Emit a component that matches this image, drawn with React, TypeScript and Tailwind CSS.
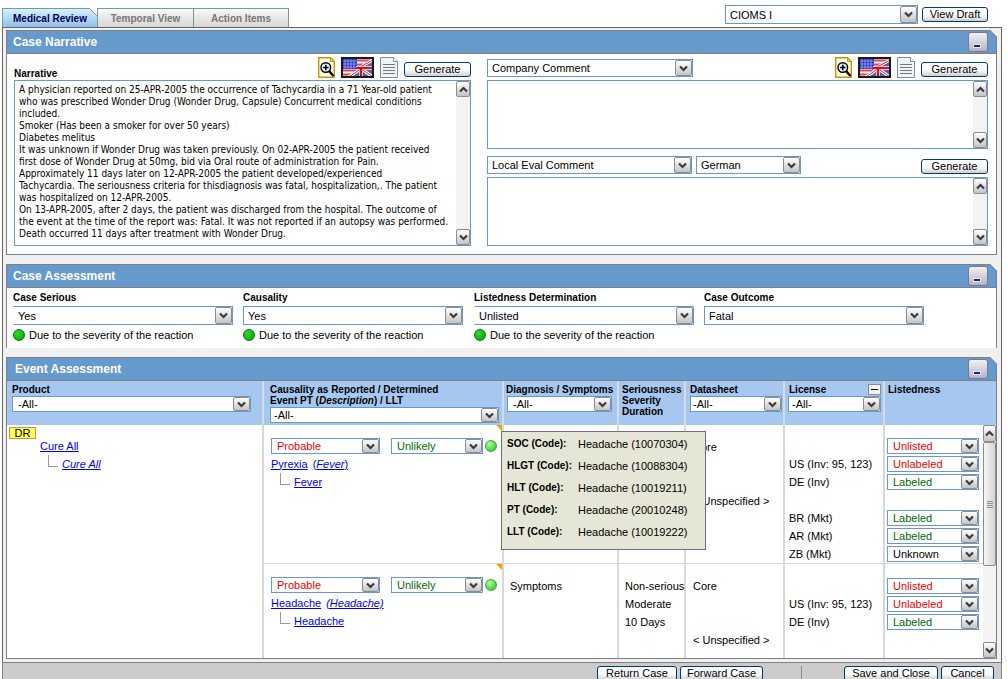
import { useId } from "react";
import type { ReactNode } from "react";
import clsx from "clsx";

const narrative = `A physician reported on 25-APR-2005 the occurrence of Tachycardia in a 71 Year-old patient
who was prescribed Wonder Drug (Wonder Drug, Capsule) Concurrent medical conditions
included.
Smoker (Has been a smoker for over 50 years)
Diabetes melitus
It was unknown if Wonder Drug was taken previously. On 02-APR-2005 the patient received
first dose of Wonder Drug at 50mg, bid via Oral route of administration for Pain.
Approximately 11 days later on 12-APR-2005 the patient developed/experienced
Tachycardia. The seriousness criteria for thisdiagnosis was fatal, hospitalization,. The patient
was hospitalized on 12-APR-2005.
On 13-APR-2005, after 2 days, the patient was discharged from the hospital. The outcome of
the event at the time of the report was: Fatal. It was not reported if an autopsy was performed.
Death occurred 11 days after treatment with Wonder Drug.`;

const codes = [
  ["SOC (Code):", "Headache (10070304)"],
  ["HLGT (Code):", "Headache (10088304)"],
  ["HLT (Code):", "Headache (10019211)"],
  ["PT (Code):", "Headache (20010248)"],
  ["LLT (Code):", "Headache (10019222)"],
];

const assessments = [
  { label: "Case Serious", value: "Yes", reason: true, open: true },
  { label: "Causality", value: "Yes", reason: true, open: false },
  { label: "Listedness Determination", value: "Unlisted", reason: true, open: true },
  { label: "Case Outcome", value: "Fatal", reason: false, open: false },
];

type Tone = "red" | "green" | "black";

const tones: Record<Tone, string> = {
  red: "text-[#f00000]",
  green: "text-[#006a00]",
  black: "text-black",
};

const firstListing: ([string, Tone] | null)[] = [
  ["Unlisted", "red"],
  ["Unlabeled", "red"],
  ["Labeled", "green"],
  null,
  ["Labeled", "green"],
  ["Labeled", "green"],
  ["Unknown", "black"],
];

const secondListing: ([string, Tone] | null)[] = [
  ["Unlisted", "red"],
  ["Unlabeled", "red"],
  ["Labeled", "green"],
];

function Chevron({ up = false }: { up?: boolean }) {
  return (
    <svg width="9" height="7" viewBox="0 0 9 7" fill="none" className={clsx(up && "rotate-180")}>
      <path d="M1 1.5 4.5 5 8 1.5" stroke="#3a3a3a" strokeWidth="2.2" />
    </svg>
  );
}

const grayFace = "flex items-center justify-center rounded-[2px] border border-[#8c8c8c] bg-linear-to-b from-white to-[#c4c4c4]";

type SelectProps = { label: string; value: string; className?: string; field?: string };

function Select({ label, value, className, field = "h-[16px] pl-[5px]" }: SelectProps) {
  return (
    <div className={clsx("relative", className)}>
      <select
        aria-label={label}
        className={clsx("block w-full appearance-none border border-[#6699cc] bg-white pr-[18px] text-[11px] leading-[14px]", field)}
      >
        <option>{value}</option>
      </select>
      <span className={clsx(grayFace, "pointer-events-none absolute inset-y-px right-px w-[17px]")}>
        <Chevron />
      </span>
    </div>
  );
}

function PushButton({ children, className }: { children: ReactNode; className?: string }) {
  return (
    <button
      className={clsx(
        "h-[15px] rounded-[3px] border border-[#003c74] bg-linear-to-b from-white from-50% to-[#cfcfcf] text-center text-[11px] leading-[13px] whitespace-nowrap",
        className,
      )}
    >
      {children}
    </button>
  );
}

function TextBox({ id, label, value = "", className }: { id?: string; label?: string; value?: string; className?: string }) {
  return (
    <div className={clsx("flex border border-[#6699cc] bg-white", className)}>
      <textarea
        id={id}
        aria-label={label}
        defaultValue={value}
        wrap="off"
        className="min-w-0 flex-1 resize-none overflow-hidden pt-[3px] pl-1 font-['DejaVu_Sans_Condensed','DejaVu_Sans',sans-serif] text-[10px] leading-[12px]"
      />
      <div className="flex w-[14px] flex-col justify-between bg-[#f3f3f3]">
        <button aria-label="Scroll up" className={clsx(grayFace, "h-[16px]")}>
          <Chevron up />
        </button>
        <button aria-label="Scroll down" className={clsx(grayFace, "h-[16px]")}>
          <Chevron />
        </button>
      </div>
    </div>
  );
}

function ZoomIcon() {
  return (
    <svg width="17" height="21" viewBox="0 0 17 21">
      <path d="M.7.7h11.8l3.8 3.8v15.8H.7z" fill="#fffbe6" stroke="#c89600" strokeWidth="1.4" />
      <path d="M12.5.7v3.8h3.8" fill="none" stroke="#c89600" />
      <path d="m11 14 4.5 5" stroke="#000" strokeWidth="2.4" />
      <circle cx="7.8" cy="10.5" r="4.8" fill="#e4f4ff" stroke="#000" strokeWidth="1.4" />
      <path d="M7.8 7.8v5.4M5.1 10.5h5.4" stroke="#000" strokeWidth="1.6" />
    </svg>
  );
}

function FlagIcon() {
  return (
    <svg width="33" height="21" viewBox="0 0 33 21">
      <path d="M0 0h33v21H0z" fill="#fff" />
      <path d="M16 3.500h16M16 7.500h16M1 13.500h14M1 17.500h10" stroke="#e8404a" strokeWidth="2" />
      <path d="M1 1h15v11H1z" fill="#2230c8" />
      <path d="M1 4h15M1 7h15M1 10h15M4 1v11M7 1v11M10 1v11M13 1v11" stroke="#c8ccf4" strokeWidth=".6" />
      <path d="M32 4v16H8l7-8 6-4z" fill="#4a66ac" />
      <path d="m8 20 10-7M21 9l11-6M22 13l10 7" stroke="#fff" strokeWidth="3" />
      <path d="m8 20 10-7M21 9l11-6M22 13l10 7" stroke="#d8202a" />
      <path d="M20 9v11M15 11h17" stroke="#fff" strokeWidth="4" />
      <path d="M20 10v10M15 11h17" stroke="#c8142a" strokeWidth="2.6" />
      <path d="M1 1h31v19H1z" fill="none" stroke="#1a1a1a" strokeWidth="2" />
    </svg>
  );
}

function PageIcon() {
  return (
    <svg width="18" height="21" viewBox="0 0 18 21">
      <path d="M.5.500h13l4 4v16H.5z" fill="#eef4fb" stroke="#8a8a8a" />
      <path d="M13.500.500v4h4" fill="#fff" stroke="#8a8a8a" />
      <path d="M3 7.500h12M3 10.500h12M3 13.500h12M3 16.500h12" stroke="#777" />
    </svg>
  );
}

function Toolbar() {
  return (
    <div className="flex items-end">
      <button aria-label="Zoom" className="mr-[6px] mb-[2px]"><ZoomIcon /></button>
      <button aria-label="Language" className="mr-[6px] mb-[2px]"><FlagIcon /></button>
      <button aria-label="Notes" className="mr-[6px] mb-[2px]"><PageIcon /></button>
      <PushButton className="mb-[3px] w-[67px]">Generate</PushButton>
    </div>
  );
}

function Ball({ light = false }: { light?: boolean }) {
  return (
    <span
      className={clsx(
        "block size-[12px] shrink-0 rounded-full border bg-radial-[at_35%_30%]",
        light ? "border-[#3fa83f] from-[#a8ff98] to-[#1fbf1f]" : "border-[#0b7a0b] from-[#30dc30] to-[#009c00]",
      )}
    />
  );
}

function Panel({ title, titleClass, className, children }: { title: string; titleClass?: string; className?: string; children: ReactNode }) {
  return (
    <section className={clsx("relative border-x border-t border-[#808080] bg-white", className)}>
      <header className="flex h-[23px] items-center justify-between border-b border-[#808080] bg-[#6699cc] pr-[8px]">
        <h2 className={clsx("text-xs font-bold text-white", titleClass)}>{title}</h2>
        <button
          aria-label={`Collapse ${title}`}
          className="flex size-[20px] items-end rounded-[3px] border border-[#77779c] bg-linear-to-b from-[#f2f2f2] to-[#b4b4c6] pb-[3px] pl-[4px]"
        >
          <span className="block h-[4px] w-[8px] border border-[#e8e8f4] bg-[#24245c]" />
        </button>
      </header>
      {/* cut corner */}
      <svg width="8" height="8" viewBox="0 0 8 8" className="absolute -top-px -right-px">
        <path d="M1 0h7v7z" fill="#f0f0f0" />
        <path d="M.5 0 8 7.500" stroke="#808080" />
      </svg>
      {children}
    </section>
  );
}

function CaseNarrative() {
  const id = useId();
  return (
    <Panel title="Case Narrative" titleClass="pl-[6px]" className="border-b">
      <div className="grid grid-cols-[457fr_501fr] gap-[16px] pt-[3px] pr-[8px] pb-[8px] pl-[7px]">
        <div className="flex flex-col">
          <div className="flex h-[23px] items-end justify-between">
            <label htmlFor={id} className="text-[10px] leading-[12px] font-bold">Narrative</label>
            <Toolbar />
          </div>
          <TextBox id={id} value={narrative} className="h-[166px]" />
        </div>
        <div className="flex flex-col">
          <div className="flex h-[23px] items-end justify-between">
            <Select label="Comment type" value="Company Comment" className="mb-[3px] w-[206px]" field="h-[18px] pl-1" />
            <Toolbar />
          </div>
          <TextBox label="Company Comment text" className="h-[69px]" />
          <div className="flex h-[28px] items-end justify-between">
            <div className="mb-[3px] flex gap-1">
              <Select label="Evaluation type" value="Local Eval Comment" className="w-[205px]" field="h-[18px] pl-1" />
              <Select label="Language" value="German" className="w-[105px]" field="h-[18px] pl-1" />
            </div>
            <PushButton className="mb-[3px] w-[67px]">Generate</PushButton>
          </div>
          <TextBox label="Local Eval Comment text" className="h-[69px]" />
        </div>
      </div>
    </Panel>
  );
}

function CaseAssessment() {
  return (
    <Panel title="Case Assessment" titleClass="pl-[6px]" className="mt-[9px]">
      <div className="grid h-[60px] grid-cols-[230fr_231fr_230fr_292fr] pt-1 pl-[6px]">
        {assessments.map((item) => (
          <div key={item.label}>
            <div className="pb-[2px] text-[10px] leading-[12px] font-bold">{item.label}</div>
            <Select
              label={item.label}
              value={item.value}
              className="w-[220px]"
              field={item.open ? "h-[19px] border-l-transparent pl-1" : "h-[19px] pl-1"}
            />
            {item.reason && (
              <div className="mt-[3px] flex h-[14px] items-center gap-[4px] text-[11px] leading-[14px]">
                <Ball />
                Due to the severity of the reaction
              </div>
            )}
          </div>
        ))}
      </div>
    </Panel>
  );
}

const link = "text-[#0000ee] underline";

function Branch({ children, className }: { children: ReactNode; className?: string }) {
  return (
    <div className={clsx("flex h-[18px] items-center gap-[4px]", className)}>
      <span className="mb-[7px] h-[12px] w-[10px] border-b border-l border-[#999]" />
      {children}
    </div>
  );
}

function CausalityCell({ name, lowest, description }: { name: string; lowest: string; description: ReactNode }) {
  return (
    <div>
      <div className="flex h-[18px] items-center">
        <Select label={`${name} reported causality`} value="Probable" className="mr-[11px] w-[109px] text-[#f00000]" />
        <Select label={`${name} determined causality`} value="Unlikely" className="mr-[2px] w-[92px] text-[#006a00]" />
        <Ball light />
      </div>
      <div className="flex h-[18px] items-center gap-[5px]">
        <a href="#event" className={link}>{name}</a>
        {description}
      </div>
      <Branch className="pl-[9px]">
        <a href="#llt" className={link}>{lowest}</a>
      </Branch>
    </div>
  );
}

function Corner() {
  return (
    <svg width="6" height="6" viewBox="0 0 6 6" className="absolute top-0 right-0">
      <path d="M0 0h6v6z" fill="#ff9900" />
    </svg>
  );
}

function Lines({ items }: { items: string[] }) {
  return (
    <div className="leading-[18px] whitespace-nowrap">
      {items.map((item, i) => (
        <div key={i} className="h-[18px]">{item}</div>
      ))}
    </div>
  );
}

function Listings({ items }: { items: ([string, Tone] | null)[] }) {
  return (
    <div>
      {items.map((item, i) => (
        <div key={i} className={clsx("flex h-[18px] items-center", item && tones[item[1]])}>
          {item && <Select label={`Listedness ${i + 1}`} value={item[0]} className="w-[92px]" />}
        </div>
      ))}
    </div>
  );
}

function CodeTip() {
  return (
    <dl
      role="tooltip"
      className="absolute top-[6px] -left-[3px] z-10 grid w-[205px] grid-cols-[71px_1fr] gap-y-[2px] border border-[#707070] bg-[#e5e6d5] px-[5px] pt-[2px] pb-[7px] leading-[20px] whitespace-nowrap"
    >
      {codes.map(([term, code]) => (
        <div key={term} className="contents">
          <dt className="text-[10px] font-bold">{term}</dt>
          <dd>{code}</dd>
        </div>
      ))}
    </dl>
  );
}

function EventAssessment() {
  const th = "border-r-2 border-[#d8dce2] pt-[3px] text-left align-top font-bold";
  const td = "relative border-r-2 border-[#d8d8d8] align-top";
  return (
    <Panel title="Event Assessment" titleClass="pl-2" className="mt-[9px] border-b">
      <table className="w-full table-fixed border-separate border-spacing-0 text-[11px]">
        <colgroup>
          <col />
          <col className="w-[240px]" />
          <col className="w-[115px]" />
          <col className="w-[67px]" />
          <col className="w-[99px]" />
          <col className="w-[100px]" />
          <col className="w-[98px]" />
          <col className="w-[13px]" />
        </colgroup>
        <thead className="bg-[#a6c8f0] text-[10px] leading-[11px]">
          <tr className="h-[44px]">
            <th className={clsx(th, "pl-[5px]")}>
              Product
              <Select label="Product" value="-All-" className="mt-px w-[239px] font-normal" />
            </th>
            <th className={clsx(th, "pl-[6px]")}>
              Causality as Reported / Determined
              <br />
              Event PT (<i>Description</i>) / LLT
              <Select label="Causality" value="-All-" className="mt-px w-[229px] font-normal" field="h-[16px] pl-[3px]" />
            </th>
            <th className={clsx(th, "pl-[2px] whitespace-nowrap")}>
              Diagnosis / Symptoms
              <Select label="Diagnosis" value="-All-" className="mt-px ml-px w-[105px] font-normal" />
            </th>
            <th className={clsx(th, "pl-[3px]")}>
              Seriousness
              <br />
              Severity
              <br />
              Duration
            </th>
            <th className={clsx(th, "pl-1")}>
              Datasheet
              <Select label="Datasheet" value="-All-" className="mt-px w-[92px] font-normal" field="h-[16px] pl-[2px]" />
            </th>
            <th className={clsx(th, "pl-[3px]")}>
              <div className="flex justify-between pr-[2px] pl-px">
                License
                <button aria-label="Collapse licenses" className="flex h-[11px] w-[13px] items-center justify-center border border-[#8c8c8c] bg-[#f4f4f4]">
                  <span className="h-px w-[7px] bg-black" />
                </button>
              </div>
              <Select label="License" value="-All-" className="mt-px w-[93px] font-normal" field="h-[16px] pl-[3px]" />
            </th>
            <th colSpan={2} className="pt-[3px] pl-[3px] text-left align-top font-bold">Listedness</th>
          </tr>
        </thead>
        <tbody>
          <tr className="h-[139px]">
            <td rowSpan={2} className={clsx(td, "pt-[2px] pl-[2px]")}>
              <div className="h-[12px] w-[27px] border border-[#c89632] bg-[#ffff66] text-center leading-[10px]">DR</div>
              <div className="pl-[31px] leading-[14px]"><a href="#product" className={link}>Cure All</a></div>
              <Branch className="mt-[2px] pl-[39px]">
                <a href="#license" className={clsx(link, "italic")}>Cure All</a>
              </Branch>
            </td>
            <td className={clsx(td, "border-b pt-[12px] pl-[7px]")}>
              <CausalityCell
                name="Pyrexia"
                lowest="Fever"
                description={<a href="#description" className={link}>(<i>Fever</i>)</a>}
              />
              <Corner />
            </td>
            <td className={clsx(td, "border-b")}><CodeTip /></td>
            <td className={clsx(td, "border-b")} />
            <td className={clsx(td, "border-b pt-[13px] pl-[7px]")}>
              <Lines items={["Core", "", "", "< Unspecified >"]} />
            </td>
            <td className={clsx(td, "border-b pt-[12px] pl-1")}>
              <Lines items={["", "US (Inv: 95, 123)", "DE (Inv)", "", "BR (Mkt)", "AR (Mkt)", "ZB (Mkt)"]} />
            </td>
            <td className="border-b border-[#d8d8d8] pt-[12px] pl-[2px] align-top">
              <Listings items={firstListing} />
            </td>
            <td rowSpan={2} className="bg-[#f3f3f3] p-0 align-top">
              <div className="flex h-[233px] flex-col">
                <button aria-label="Scroll up" className={clsx(grayFace, "h-[17px]")}><Chevron up /></button>
                <div className="flex h-[124px] flex-col items-center justify-center gap-px rounded-[2px] border border-[#8c8c8c] bg-linear-to-r from-[#f6f6f6] to-[#d4d4d4]">
                  <span className="h-px w-[6px] bg-[#8c8c8c]" />
                  <span className="h-px w-[6px] bg-[#8c8c8c]" />
                  <span className="h-px w-[6px] bg-[#8c8c8c]" />
                  <span className="h-px w-[6px] bg-[#8c8c8c]" />
                </div>
                <button aria-label="Scroll down" className={clsx(grayFace, "mt-auto h-[16px]")}><Chevron /></button>
              </div>
            </td>
          </tr>
          <tr className="h-[94px]">
            <td className={clsx(td, "pt-[12px] pl-[7px]")}>
              <CausalityCell
                name="Headache"
                lowest="Headache"
                description={<a href="#description" className={clsx(link, "italic")}>(Headache)</a>}
              />
              <Corner />
            </td>
            <td className={clsx(td, "pt-[13px] pl-[6px]")}><Lines items={["Symptoms"]} /></td>
            <td className={clsx(td, "pt-[13px] pl-[6px]")}><Lines items={["Non-serious", "Moderate", "10 Days"]} /></td>
            <td className={clsx(td, "pt-[13px] pl-[7px]")}><Lines items={["Core", "", "", "< Unspecified >"]} /></td>
            <td className={clsx(td, "pt-[13px] pl-1")}><Lines items={["", "US (Inv: 95, 123)", "DE (Inv)"]} /></td>
            <td className="pt-[13px] pl-[2px] align-top"><Listings items={secondListing} /></td>
          </tr>
        </tbody>
      </table>
    </Panel>
  );
}

export default function App() {
  return (
    <div className="flex h-screen flex-col overflow-hidden bg-white pr-[5px] pl-[2px] font-['Liberation_Sans',Arial,sans-serif] text-[11px] text-black">
      {/* Tabs and report picker */}
      <div className="flex h-[27px] shrink-0 items-end justify-between">
        <nav className="flex h-[19px] text-[10px] font-bold text-[#777]">
          <button className="relative w-[95px] border-t border-l border-[#6f9d97] bg-linear-to-b from-[#d4f0ff] to-[#8fc0ea] text-[#000050]">
            Medical Review
            <svg width="8" height="8" viewBox="0 0 8 8" className="absolute -top-px right-0">
              <path d="M0 0h8v8z" fill="#fff" />
              <path d="m0 0 8 8" stroke="#6f9d97" />
            </svg>
          </button>
          <button className="w-[97px] border-x border-t border-[#6f9d97] bg-linear-to-b from-[#f8f8f8] to-[#d6d6d6]">Temporal View</button>
          <button className="w-[95px] border-t border-r border-[#6f9d97] bg-linear-to-b from-[#f8f8f8] to-[#d6d6d6]">Action Items</button>
        </nav>
        <div className="mb-[3px] flex items-center gap-1 pr-[14px]">
          <Select label="Report form" value="CIOMS I" className="w-[193px]" field="h-[19px] pl-1" />
          <PushButton className="w-[66px]">View Draft</PushButton>
        </div>
      </div>

      <main className="shrink-0 border border-b-0 border-[#666] bg-[#f0f0f0] pt-[2px] pr-[4px] pb-[3px] pl-[3px]">
        <CaseNarrative />
        <CaseAssessment />
        <EventAssessment />
      </main>

      <footer className="flex shrink-0 items-start justify-end border border-[#808080] bg-[#ccc] pt-[3px] pr-[7px] pb-[6px]">
        <PushButton className="mr-[3px] w-[80px]">Return Case</PushButton>
        <PushButton className="w-[83px]">Forward Case</PushButton>
        <span className="mr-[42px] ml-[38px] h-[15px] w-px bg-[#888]" />
        <PushButton className="mr-[3px] w-[94px]">Save and Close</PushButton>
        <PushButton className="w-[53px]">Cancel</PushButton>
      </footer>
    </div>
  );
}
